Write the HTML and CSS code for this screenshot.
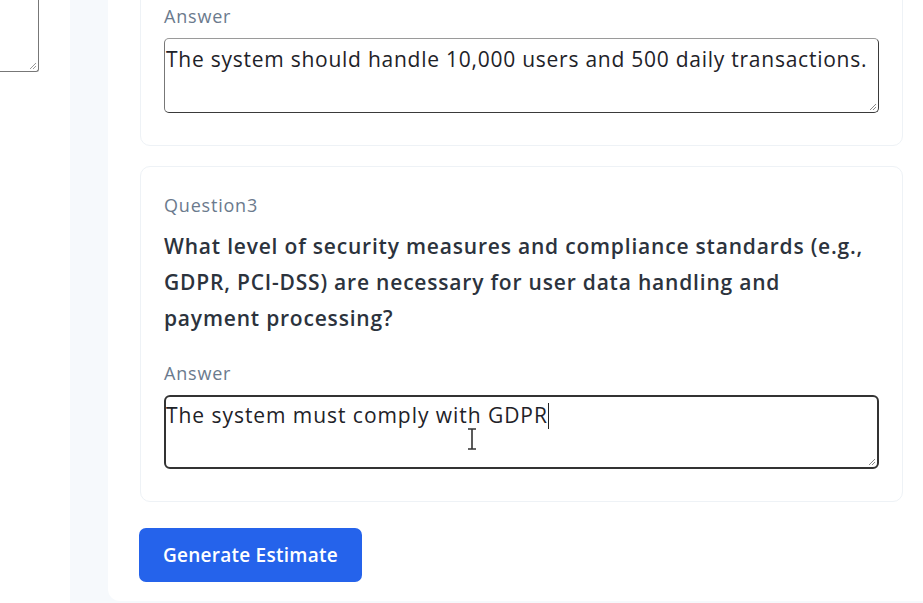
FILE: index.html
```html
<!DOCTYPE html>
<html>
<head>
<meta charset="utf-8">
<link rel="stylesheet" href="styles.css">
</head>
<body>
  <div class="left">
    <div class="stub">
      <svg class="grip" width="10" height="10" viewBox="0 0 10 10"><path d="M9 3 L3 9 M9 6 L6 9" stroke="#999" stroke-width="1"/></svg>
    </div>
  </div>
  <div class="shell">
    <main class="panel">
      <section class="card card-first">
        <div class="label">Answer</div>
        <div class="area">
          <span class="val">The system should handle 10,000 users and 500 daily transactions.</span>
          <svg class="grip" width="10" height="10" viewBox="0 0 10 10"><path d="M9 3 L3 9 M9 6 L6 9" stroke="#888" stroke-width="1"/></svg>
        </div>
      </section>
      <section class="card">
        <div class="label qlabel">Question3</div>
        <p class="question">What level of security measures and compliance standards (e.g., GDPR, PCI-DSS) are necessary for user data handling and payment processing?</p>
        <div class="label">Answer</div>
        <div class="area focus">
          <span class="val">The system must comply with GDPR</span><span class="caret"></span>
          <svg class="grip" width="10" height="10" viewBox="0 0 10 10"><path d="M9 3 L3 9 M9 6 L6 9" stroke="#888" stroke-width="1"/></svg>
          <svg class="ibeam" width="12" height="22" viewBox="0 0 12 22"><path d="M2 1 H10 M6 1 V21 M2 21 H10" stroke="#333" stroke-width="1.6" fill="none"/></svg>
        </div>
      </section>
      <button class="btn">Generate Estimate</button>
    </main>
  </div>
</body>
</html>
```

FILE: styles.css
```css
html, body {
  margin: 0;
  padding: 0;
  height: 603px;
  overflow: hidden;
  background: #ffffff;
}
body {
  display: flex;
  font-family: "Open Sans", "Noto Sans", sans-serif;
}
.left {
  width: 70px;
  flex: none;
  background: #fff;
}
.stub {
  position: relative;
  width: 38px;
  height: 71px;
  border-right: 1.5px solid #777;
  border-bottom: 1.5px solid #777;
  border-bottom-right-radius: 3px;
}
.shell {
  flex: 1;
  display: flex;
  background: #f6f9fc;
  padding-left: 38px;
}
.panel {
  flex: 1;
  background: #fff;
  border-bottom-left-radius: 12px;
  margin-bottom: 2px;
  padding: 0 20px 0 32px;
  display: flex;
  flex-direction: column;
  align-items: flex-start;
}
.card {
  align-self: stretch;
  border: 1px solid #eef2f6;
  border-radius: 10px;
  padding: 26px 23px 32px 23px;
  margin-bottom: 20px;
}
.card-first {
  margin-top: -20px;
  padding-top: 23px;
}
.label {
  font-size: 18px;
  line-height: 24px;
  letter-spacing: 0.8px;
  color: #6b7a8d;
  margin-bottom: 10px;
}
.qlabel {
  margin-bottom: 11px;
}
.question {
  margin: 0 0 25px 0;
  font-size: 21px;
  line-height: 36px;
  font-weight: 600;
  letter-spacing: 0.8px;
  color: #2c333d;
}
.area {
  position: relative;
  height: 75px;
  box-sizing: border-box;
  border: 1.5px solid #3a3a3a;
  border-top-color: #9a9a9a;
  border-left-color: #777;
  border-radius: 5px;
  padding: 6px 1px;
  font-size: 21px;
  line-height: 28px;
  letter-spacing: 0.75px;
  color: #1e2228;
}
.area.focus {
  height: 74px;
  border: 2.5px solid #333;
  border-radius: 6px;
  padding: 4px 0;
  letter-spacing: 0.95px;
}
.val {
  white-space: nowrap;
}
.caret {
  display: inline-block;
  width: 1.5px;
  height: 26px;
  background: #222;
  vertical-align: -6px;
}
.grip {
  position: absolute;
  right: 1px;
  bottom: 1px;
}
.ibeam {
  position: absolute;
  left: 300px;
  top: 31px;
}
.btn {
  margin-top: 6px;
  margin-left: -1px;
  background: #2563eb;
  color: #fff;
  border: none;
  border-radius: 7px;
  height: 54px;
  padding: 0 24px;
  font-family: "Open Sans", "Noto Sans", sans-serif;
  font-size: 19px;
  font-weight: 600;
  letter-spacing: 0.25px;
}
```
